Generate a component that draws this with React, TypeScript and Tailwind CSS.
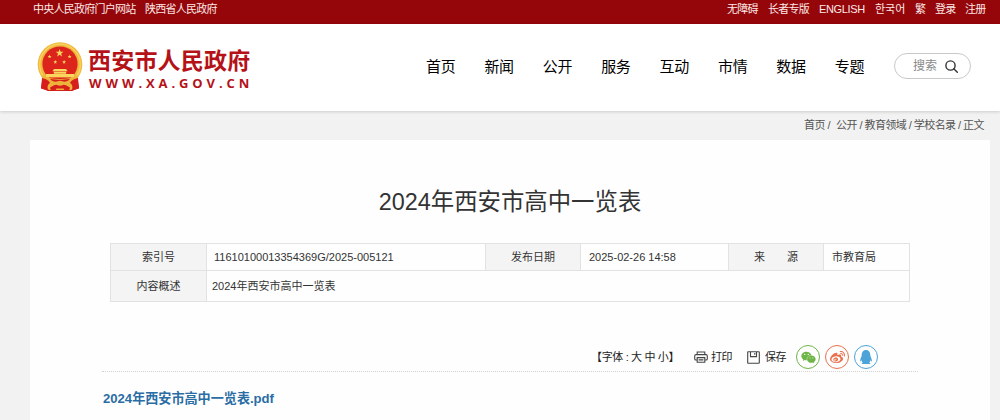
import { ReactNode } from 'react';
import { FaQq, FaWeibo, FaWeixin } from 'react-icons/fa';

const NAV_ITEMS = ['首页', '新闻', '公开', '服务', '互动', '市情', '数据', '专题'];

const TOP_LINKS = [
  { label: '无障碍', className: 'w-[41px]' },
  { label: '长者专版', className: 'w-[51px]' },
  { label: 'ENGLISH', className: 'w-[56px] tracking-[-0.35px]' },
  { label: '한국어', className: 'w-[40px] tracking-normal' },
  { label: '繁', className: 'w-[20px]' },
  { label: '登录', className: 'w-[30px]' },
  { label: '注册', className: 'w-[22px]' },
];

function Emblem() {
  const star = 'M0-4 1-1.3 3.9-1.2 1.6.6 2.4 3.4 0 1.8-2.4 3.4-1.6.6-3.9-1.2-1-1.3Z';
  return (
    <svg className="h-[50px] w-[46px] shrink-0" viewBox="0 0 46 50">
      <path d="M6 34 4 46l7 3h24l7-3-2-12Z" fill="#d61f1b" />
      <circle cx="23" cy="22.5" r="22.3" fill="#f0b93e" />
      <circle cx="23" cy="22.5" r="20.3" fill="none" stroke="#f8d766" strokeWidth="1.2" />
      <circle cx="23" cy="22" r="17.6" fill="#dc241d" />
      <g fill="#fad65c">
        <path d={star} transform="translate(22.6 11)" />
        <path d={star} transform="translate(12.6 14.6) scale(.5)" />
        <path d={star} transform="translate(32.6 14.6) scale(.5)" />
        <path d={star} transform="translate(18.3 20) scale(.5)" />
        <path d={star} transform="translate(27.1 20) scale(.5)" />
        <path d="M17 27h12l1.6 2.2H15.4ZM16.8 29.8h12.4v2H16.8Z" />
        <path d="M9 32h28v3.4H9Z" />
      </g>
      <path d="M5 33c6 3 11 4 18 4s12-1 18-4l-1 11-6 4H12l-6-4Z" fill="#eeb33a" />
      <path d="M5 36c5 1 7 3 8 5-2 1-3 3-2 7.5l-7-2ZM41 36c-5 1-7 3-8 5 2 1 3 3 2 7.5l7-2Z" fill="#d61f1b" />
      <path d="M13 37c4 .2 7 .8 10 .8s6-.6 10-.8c-2 2.5-5 3-7 2.6q-3-1.8-6 0c-2 .4-5-.1-7-2.6Z" fill="#d61f1b" />
      <path d="M13 45.5c3-1.5 5-3 7-2.6q3 1.6 6 0c2-.4 4 1.1 7 2.6l-1 3.5h-4l-1.5-2.5h-7L18 49h-4Z" fill="#d61f1b" />
    </svg>
  );
}

function SearchIcon() {
  return (
    <svg className="size-[13px]" viewBox="0 0 13 13" fill="none" stroke="#333" strokeWidth="1.4">
      <circle cx="5.5" cy="5.5" r="4.6" />
      <path d="m8.8 8.8 3.5 3.5" strokeLinecap="round" />
    </svg>
  );
}

function PrintIcon() {
  return (
    <svg className="h-3 w-[14px]" viewBox="0 0 14 12" fill="none" stroke="#444" strokeWidth="1.1">
      <path d="M3.2 3.6V1h7.6v2.6M3 9H2Q.7 9 .7 7.7V5Q.7 3.6 2 3.6h10q1.3 0 1.3 1.4v2.7Q13.3 9 12 9h-1" />
      <path d="M3.2 6.6h7.6v4.7H3.2ZM4.6 8.9h4.8" />
    </svg>
  );
}

function SaveIcon() {
  return (
    <svg className="size-[13px]" viewBox="0 0 13 13" fill="none" stroke="#444" strokeWidth="1.1">
      <path d="M1.3.7h10.4q.6 0 .6.6v10.4q0 .6-.6.6H1.3q-.6 0-.6-.6V1.3q0-.6.6-.6ZM3.5 1v4.6h6V1M7.8 2v1.8" />
    </svg>
  );
}

function Share({ className, children }: { className: string; children: ReactNode }) {
  return (
    <a className={`flex size-[24px] items-center justify-center rounded-full border ${className}`}>
      {children}
    </a>
  );
}

const LABEL = 'border border-[#e2e2e2] bg-[#f4f4f4] text-center';
const VALUE = 'border border-[#e2e2e2]';

export default function App() {
  return (
    <div className="h-[420px] w-[1000px] overflow-hidden bg-[#f2f2f2] font-['Liberation_Sans','Noto_Sans_CJK_SC','Noto_Sans_CJK_KR',sans-serif] whitespace-nowrap text-[#333]">
      {/* Top bar */}
      <div className="flex h-6 justify-between bg-[#95060b] pl-[33px] text-[11px] leading-[18px] tracking-[-0.75px] text-[#fbe9e6]">
        <div className="flex">
          <span className="w-[112px]">中央人民政府门户网站</span>
          <span>陕西省人民政府</span>
        </div>
        <div className="flex pr-[13px]">
          {TOP_LINKS.map((link) => (
            <span key={link.label} className={link.className}>{link.label}</span>
          ))}
        </div>
      </div>

      {/* Header */}
      <header className="flex h-[87px] bg-white pl-[37px] shadow-[0_1px_3px_rgba(0,0,0,0.16)]">
        <div className="flex w-[389px] pt-[18px]">
          <Emblem />
          <div className="pt-[6px] pl-[5px] text-[#b51218]">
            <div className="text-[23px] leading-[26px] font-bold tracking-[0.2px]">西安市人民政府</div>
            <div className="pt-px pl-px font-['Open_Sans',sans-serif] text-[13px] leading-[16px] font-bold tracking-[3.9px]">WWW.XA.GOV.CN</div>
          </div>
        </div>
        <nav className="flex w-[468px] pt-[32px] text-[15px] leading-[22px] tracking-[-0.3px] text-black">
          {NAV_ITEMS.map((item) => (
            <a key={item} className="w-[58.4px]">{item}</a>
          ))}
        </nav>
        <div className="mt-[29px] flex h-[26px] w-[77px] items-center rounded-full border border-[#c9c9c9] pl-[18px] text-[12px] text-[#888]">
          <span className="w-8">搜索</span>
          <SearchIcon />
        </div>
      </header>

      <div className="flex h-[29px] justify-end pt-[5px] pr-[16px] text-[11px] leading-[18px] text-[#555]">
        <span className="w-[32px] tracking-[-0.55px]">首页 /</span>
        <span className="tracking-[-0.55px]">公开 / 教育领域 / 学校名录 / 正文</span>
      </div>

      {/* Article */}
      <main className="mr-[10px] ml-[30px] h-[280px] bg-[#fefefe] px-[72px] pt-[45px]">
        <h1 className="text-center text-[23.4px] leading-[34px]">2024年西安市高中一览表</h1>

        <table className="mt-[24px] ml-2 w-[799px] table-fixed border-collapse text-[11px] leading-[16px]">
          <colgroup>
            <col className="w-[96px]" />
            <col className="w-[279px]" />
            <col className="w-[95px]" />
            <col className="w-[148px]" />
            <col className="w-[95px]" />
            <col className="w-[86px]" />
          </colgroup>
          <tbody>
            <tr className="h-[27px]">
              <td className={LABEL}>索引号</td>
              <td className={`${VALUE} pl-[7px]`}>11610100013354369G/2025-005121</td>
              <td className={LABEL}>发布日期</td>
              <td className={`${VALUE} pl-2`}>2025-02-26 14:58</td>
              <td className={LABEL}>
                <span className="mr-[22px]">来</span>源
              </td>
              <td className={`${VALUE} pl-2`}>市教育局</td>
            </tr>
            <tr className="h-[31px]">
              <td className={LABEL}>内容概述</td>
              <td className={`${VALUE} pl-[5px]`} colSpan={5}>2024年西安市高中一览表</td>
            </tr>
          </tbody>
        </table>

        <div className="mt-[41px] flex h-[29px] items-center border-b border-dotted border-[#d2d2d2] pl-[489px] text-[11px] leading-[16px] text-[#222]">
          <span className="w-[103px] tracking-[-0.35px]">【字体 : 大 中 小】</span>
          <PrintIcon />
          <span className="w-[39px] pl-[3px] tracking-[-0.6px]">打印</span>
          <SaveIcon />
          <span className="w-[36px] pl-[5px] tracking-[-0.6px]">保存</span>
          <div className="flex gap-[5px]">
            <Share className="border-[#6eb548] text-[#6eb548]"><FaWeixin size={15} /></Share>
            <Share className="border-[#e9704d] text-[#e9704d]"><FaWeibo size={15} /></Share>
            <Share className="border-[#4ba3d8] text-[#4ba3d8]"><FaQq size={14} /></Share>
          </div>
        </div>

        <a className="mt-[17px] block pl-px text-[13.1px] leading-[20px] font-bold text-[#2a6da5]">2024年西安市高中一览表.pdf</a>
      </main>
    </div>
  );
}
